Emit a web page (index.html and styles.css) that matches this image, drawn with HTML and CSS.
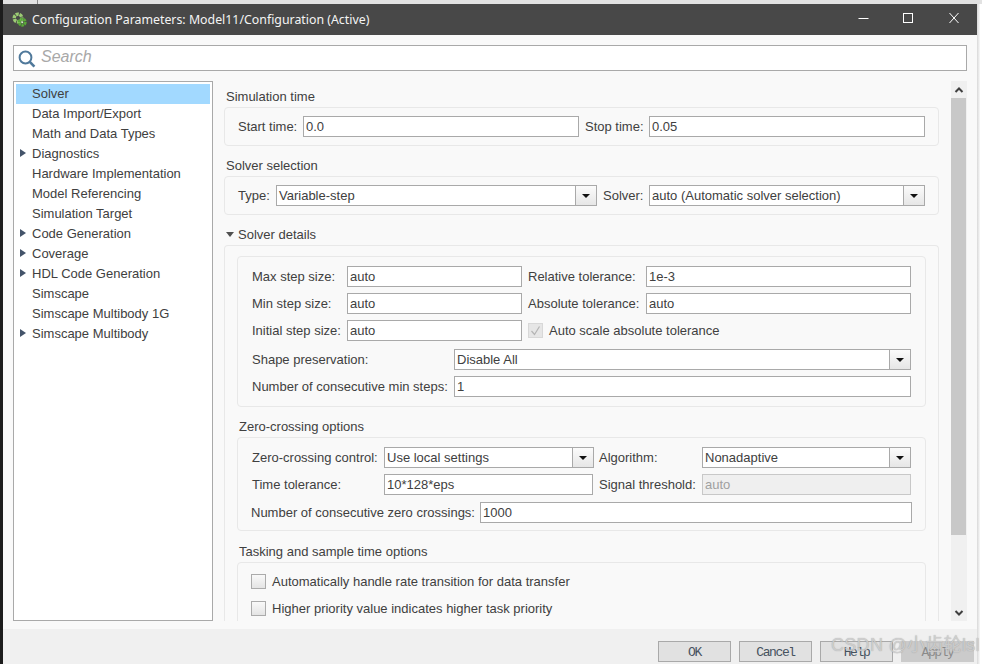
FILE: index.html
```html
<!DOCTYPE html>
<html lang="en">
<head>
<meta charset="utf-8">
<title>Configuration Parameters</title>
<link rel="stylesheet" href="styles.css">
</head>
<body>
<div class="screen">
  <div class="backdrop-top"><span class="backdrop-line"></span></div>
  <div class="screen-row">
    <div class="edge-left"></div>
    <div class="window">
      <header class="titlebar">
        <svg class="app-icon" width="15" height="15" viewBox="0 0 15 15">
          <circle cx="6" cy="6" r="3.8" fill="none" stroke="#9ccb74" stroke-width="3.4" stroke-dasharray="3 0.8"/>
          <circle cx="10.2" cy="10.2" r="3" fill="none" stroke="#58a838" stroke-width="3" stroke-dasharray="2.4 0.6"/>
          <circle cx="6" cy="6" r="1.3" fill="#484848"/>
          <circle cx="10.2" cy="10.2" r="1" fill="#d8ecc8"/>
        </svg>
        <span class="title-text">Configuration Parameters: Model11/Configuration (Active)</span>
        <div class="win-controls">
          <svg class="win-btn" width="45" height="20" viewBox="0 0 45 20"><path d="M17.5 9.5h10" stroke="#fff" fill="none"/></svg>
          <svg class="win-btn" width="45" height="20" viewBox="0 0 45 20"><rect x="17.5" y="4.5" width="9" height="9" stroke="#fff" fill="none"/></svg>
          <svg class="win-btn" width="45" height="20" viewBox="0 0 45 20"><path d="M18.5 4l9 10M27.5 4l-9 10" stroke="#fff" fill="none"/></svg>
        </div>
      </header>

      <div class="main">
        <div class="search">
          <svg class="search-icon" width="18" height="18" viewBox="0 0 18 18">
            <circle cx="7.5" cy="7.5" r="5.9" fill="none" stroke="#50799b" stroke-width="2"/>
            <path d="M11.8 11.8l4.6 4.8" stroke="#50799b" stroke-width="2.6" fill="none"/>
          </svg>
          <span class="search-text">Search</span>
        </div>

        <div class="content">
          <nav class="tree">
            <div class="tree-row selected"><span class="twist"></span>Solver</div>
            <div class="tree-row"><span class="twist"></span>Data Import/Export</div>
            <div class="tree-row"><span class="twist"></span>Math and Data Types</div>
            <div class="tree-row"><span class="twist closed"></span>Diagnostics</div>
            <div class="tree-row"><span class="twist"></span>Hardware Implementation</div>
            <div class="tree-row"><span class="twist"></span>Model Referencing</div>
            <div class="tree-row"><span class="twist"></span>Simulation Target</div>
            <div class="tree-row"><span class="twist closed"></span>Code Generation</div>
            <div class="tree-row"><span class="twist closed"></span>Coverage</div>
            <div class="tree-row"><span class="twist closed"></span>HDL Code Generation</div>
            <div class="tree-row"><span class="twist"></span>Simscape</div>
            <div class="tree-row"><span class="twist"></span>Simscape Multibody 1G</div>
            <div class="tree-row"><span class="twist closed"></span>Simscape Multibody</div>
          </nav>

          <div class="pane">
            <h3 class="group-title">Simulation time</h3>
            <section class="panel outer">
              <div class="grid-time">
                <label>Start time:</label>
                <input class="field" value="0.0">
                <label class="lbl-r">Stop time:</label>
                <input class="field" value="0.05">
              </div>
            </section>

            <h3 class="group-title spaced">Solver selection</h3>
            <section class="panel outer">
              <div class="grid-select">
                <label>Type:</label>
                <div class="combo"><span class="combo-text">Variable-step</span><span class="combo-btn"></span></div>
                <label class="lbl-r">Solver:</label>
                <div class="combo"><span class="combo-text">auto (Automatic solver selection)</span><span class="combo-btn"></span></div>
              </div>
            </section>

            <h3 class="group-title spaced details-title"><span class="twist-open"></span>Solver details</h3>
            <section class="panel details">
              <section class="panel inner">
                <div class="grid-steps">
                  <label>Max step size:</label>
                  <input class="field" value="auto">
                  <label class="lbl-r">Relative tolerance:</label>
                  <input class="field" value="1e-3">
                  <label>Min step size:</label>
                  <input class="field" value="auto">
                  <label class="lbl-r">Absolute tolerance:</label>
                  <input class="field" value="auto">
                  <label>Initial step size:</label>
                  <input class="field" value="auto">
                  <div class="check-cell">
                    <span class="check disabled">
                      <svg width="13" height="13" viewBox="0 0 13 13"><path d="M2.5 7l3 3.5 5-8" fill="none" stroke="#b4b4b4" stroke-width="1.2"/></svg>
                    </span>
                    <span>Auto scale absolute tolerance</span>
                  </div>
                </div>
                <div class="grid-shape">
                  <label>Shape preservation:</label>
                  <div class="combo"><span class="combo-text">Disable All</span><span class="combo-btn"></span></div>
                  <label>Number of consecutive min steps:</label>
                  <input class="field" value="1">
                </div>
              </section>

              <h3 class="group-title nested spaced">Zero-crossing options</h3>
              <section class="panel inner zero">
                <div class="grid-zero">
                  <label>Zero-crossing control:</label>
                  <div class="combo"><span class="combo-text">Use local settings</span><span class="combo-btn"></span></div>
                  <label class="lbl-z">Algorithm:</label>
                  <div class="combo"><span class="combo-text">Nonadaptive</span><span class="combo-btn"></span></div>
                  <label>Time tolerance:</label>
                  <input class="field narrow" value="10*128*eps">
                  <label class="lbl-z">Signal threshold:</label>
                  <input class="field off" value="auto" disabled>
                </div>
                <div class="grid-cross">
                  <label>Number of consecutive zero crossings:</label>
                  <input class="field" value="1000">
                </div>
              </section>

              <h3 class="group-title nested tasking-title">Tasking and sample time options</h3>
              <section class="panel inner tasking">
                <div class="check-row"><span class="check"></span><span>Automatically handle rate transition for data transfer</span></div>
                <div class="check-row"><span class="check"></span><span>Higher priority value indicates higher task priority</span></div>
              </section>
            </section>
          </div>

          <div class="scrollbar">
            <div class="scroll-end">
              <svg width="10" height="8" viewBox="0 0 10 8"><path d="M1.5 6L5 2.5 8.5 6" fill="none" stroke="#404040" stroke-width="2"/></svg>
            </div>
            <div class="scroll-thumb"></div>
            <div class="scroll-track">
              <svg width="10" height="8" viewBox="0 0 10 8"><path d="M1.5 2L5 5.5 8.5 2" fill="none" stroke="#404040" stroke-width="2"/></svg>
            </div>
          </div>
        </div>
      </div>

      <footer class="footer">
        <button class="btn">OK</button>
        <button class="btn">Cancel</button>
        <button class="btn">Help</button>
        <button class="btn apply">Apply</button>
      </footer>
    </div>
    <div class="edge-right"></div>
  </div>
  <div class="watermark">CSDN @小齿轮lsl</div>
</div>
</body>
</html>
```
FILE: styles.css
```css
* { box-sizing: border-box; }
html, body { margin: 0; padding: 0; }
body {
  width: 982px;
  height: 664px;
  overflow: hidden;
  background: #fff;
  font-family: "Liberation Sans", Arial, sans-serif;
  font-size: 13px;
  color: #404040;
}
.screen { position: relative; width: 982px; height: 664px; overflow: hidden; display: flex; flex-direction: column; }
.backdrop-top { position: relative; height: 4px; background: #e2e2e2; border-left: 3px solid #1c1c1c; flex: none; }
.backdrop-line { position: absolute; left: 34px; top: 0; width: 1px; height: 4px; background: #8a8a8a; }
.screen-row { display: flex; flex: 1; min-height: 0; }
.edge-left { width: 3px; background: #1c1c1c; flex: none; }
.edge-right { width: 5px; flex: none; background: linear-gradient(90deg, #d8d8d8, #fff 70%); }
.window { width: 974px; flex: none; display: flex; flex-direction: column; background: #f9f9f9; }

.titlebar { height: 31px; flex: none; background: #484848; display: flex; align-items: center; padding-left: 9px; color: #f4f4f4; }
.app-icon { flex: none; margin-right: 5px; margin-top: -1px; }
.title-text { flex: 1; font-family: "Noto Sans", sans-serif; font-size: 12.35px; margin-top: -1px; white-space: nowrap; }
.win-controls { display: flex; margin-right: 1px; margin-top: -1px; }
.win-btn { display: block; }

.main { flex: 1; min-height: 0; padding: 10px 10px 8px; display: flex; flex-direction: column; }
.search { height: 26px; flex: none; border: 1px solid #a9a9a9; background: #fff; display: flex; align-items: center; padding-left: 4px; margin-bottom: 10px; }
.search-icon { flex: none; margin-right: 5px; margin-top: 1px; }
.search-text { font-style: italic; font-size: 16px; color: #a8a8a8; margin-top: -3px; }

.content { flex: 1; min-height: 0; display: flex; }
.tree { width: 200px; flex: none; margin-right: 11px; border: 1px solid #a9a9a9; background: #fff; padding: 2px; }
.tree-row { height: 20px; display: flex; align-items: center; padding: 0 0 2px 4px; white-space: nowrap; }
.tree-row.selected { background: #a2d9ff; }
.twist { width: 12px; flex: none; height: 8px; }
.twist.closed { border-left: 6px solid #44546a; border-top: 4px solid transparent; border-bottom: 4px solid transparent; }

.pane { width: 727px; flex: none; overflow: hidden; padding: 5px 12px 0 0; }
.group-title { margin: 0; height: 21px; line-height: 21px; font-size: 13px; font-weight: normal; padding-left: 2px; white-space: nowrap; }
.group-title.spaced { margin-top: 9px; }
.details-title { display: flex; align-items: center; }
.twist-open { width: 8px; height: 5px; flex: none; margin-right: 4px; border-left: 4px solid transparent; border-right: 4px solid transparent; border-top: 5px solid #505050; margin-top: -1px; }
.tasking-title { margin-top: 10px; }

.panel { border: 1px solid #e8e8e8; border-radius: 4px; }
.panel.outer { padding: 8px 13px; }
.panel.details { padding: 10px 12px 60px; border-bottom: 0; }
.panel.inner { padding: 9px 14px 9px; }
.panel.zero { padding-bottom: 7px; }
.panel.tasking { padding: 11px 13px 60px; }

label { white-space: nowrap; display: block; }
.lbl-r { padding-left: 6px; }
.lbl-z { padding-left: 5px; }
.field { height: 21px; width: 100%; border: 1px solid #a9a9a9; background: #fff; padding: 0 2px; font: inherit; color: #404040; outline: 0; border-radius: 0; display: block; }
.field.narrow { width: 209px; }
.field.off { background: #efefef; border-color: #c8c8c8; color: #a0a0a0; }

.grid-time, .grid-select, .grid-steps, .grid-shape, .grid-zero, .grid-cross { display: grid; align-items: center; row-gap: 6px; }
.grid-time { grid-template-columns: 65px 276px 70px 276px; }
.grid-select { grid-template-columns: 38px 321px 52px 276px; }
.grid-steps { grid-template-columns: 95px 175px 124px 265px; }
.grid-shape { grid-template-columns: 202px 457px; margin-top: 8px; }
.grid-zero { grid-template-columns: 132px 210px 108px 209px; }
.grid-cross { grid-template-columns: 229px 432px; margin: 7px 0 0 -1px; }

.combo { height: 21px; border: 1px solid #a9a9a9; background: #fff; display: flex; }
.combo-text { flex: 1; padding-left: 2px; line-height: 19px; white-space: nowrap; overflow: hidden; }
.combo-btn { position: relative; width: 21px; flex: none; border-left: 1px solid #a9a9a9; background: linear-gradient(#fbfbfb, #e6e6e6); }
.combo-btn::after { content: ""; position: absolute; left: 6px; top: 8px; border-left: 4px solid transparent; border-right: 4px solid transparent; border-top: 4px solid #111; }

.check-cell { grid-column: span 2; display: flex; align-items: center; padding-left: 6px; }
.check-cell .check { margin-right: 6px; }
.check { width: 15px; height: 15px; flex: none; border: 1px solid #ababab; background: linear-gradient(#f9f9f9, #e4e4e4); display: block; }
.check svg { display: block; }
.check.disabled { background: #e6e6e6; border-color: #d8d8d8; }
.check-row { display: flex; align-items: center; height: 15px; gap: 6px; margin-bottom: 12px; }

.scrollbar { width: 16px; flex: none; display: flex; flex-direction: column; background: #f0f0f0; }
.scroll-end { height: 17px; flex: none; display: flex; align-items: center; justify-content: center; }
.scroll-thumb { height: 437px; flex: none; background: #c8c8c8; margin-right: 1px; }
.scroll-track { flex: 1; display: flex; align-items: flex-end; justify-content: center; padding-bottom: 4px; }

.footer { height: 35px; flex: none; background: #f0f0f0; display: flex; justify-content: flex-end; gap: 8px; padding: 12px 3px 0 0; }
.btn { width: 73px; height: 21px; border: 1px solid #a9a9a9; background: #e1e1e1; font-family: "Liberation Mono", monospace; font-size: 13px; letter-spacing: -1.4px; color: #46525e; padding: 2px 0 0; border-radius: 0; }
.btn.apply { background: #cbcbcb; border-color: #cbcbcb; color: #8a8a8a; }

.watermark { position: absolute; left: 831px; top: 634px; font-family: "Liberation Sans", "Noto Sans CJK SC", sans-serif; font-size: 18px; line-height: 22px; letter-spacing: 0.3px; color: rgba(215, 215, 215, 0.8); text-shadow: 0 0 1px rgba(130, 130, 130, 0.7); white-space: nowrap; }
```
